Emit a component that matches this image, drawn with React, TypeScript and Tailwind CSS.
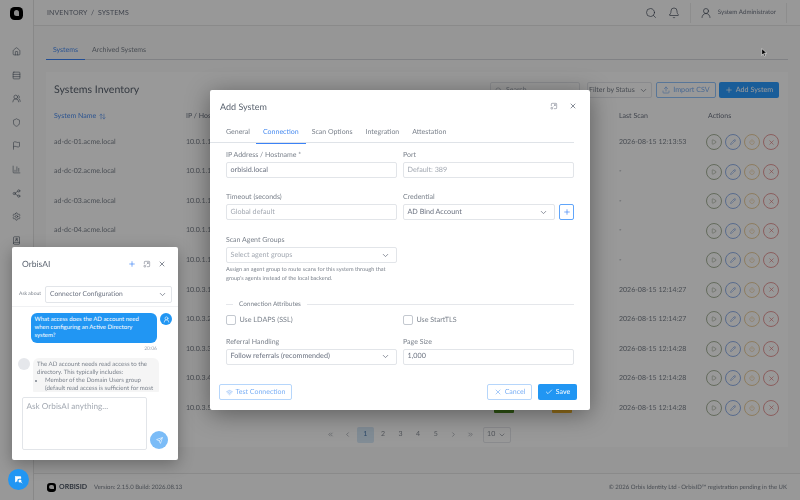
import { Home, Rows3, UsersRound, Shield, Flag, ChartColumn, Share2, Settings, BookUser, Search, Bell, UserRound, ArrowUpDown, ChevronDown, Upload, Plus, Play, Pencil, Power, X, Check, Wifi, Send, ChevronLeft, ChevronRight, ChevronsLeft, ChevronsRight } from 'lucide-react'

const font = { fontFamily: "Lato, 'Noto Sans', sans-serif" }

const navIcons = [Home, Rows3, UsersRound, Shield, Flag, ChartColumn, Share2, Settings, BookUser]

const rows = [
  { name: 'ad-dc-01.acme.local', ip: '10.0.1.10', scan: '2026-08-15 12:13:53' },
  { name: 'ad-dc-02.acme.local', ip: '10.0.1.11', scan: '-' },
  { name: 'ad-dc-03.acme.local', ip: '10.0.1.12', scan: '-' },
  { name: 'ad-dc-04.acme.local', ip: '10.0.1.13', scan: '-' },
  { name: '', ip: '10.0.1.14', scan: '-' },
  { name: '', ip: '10.0.3.10', scan: '2026-08-15 12:14:27' },
  { name: '', ip: '10.0.3.20', scan: '2026-08-15 12:14:27' },
  { name: '', ip: '10.0.3.30', scan: '2026-08-15 12:14:28' },
  { name: '', ip: '10.0.3.40', scan: '2026-08-15 12:14:28' },
  { name: '', ip: '10.0.3.50', scan: '2026-08-15 12:14:28' },
]

function Logo({ size }: { size: string }) {
  return (
    <span className={`${size} flex items-center justify-center rounded-[35%] bg-black`}>
      <span className="h-[45%] w-[45%] rounded-full rounded-br-none bg-[#e8e8e8]" />
    </span>
  )
}

function WindowMax({ className }: { className: string }) {
  return (
    <svg viewBox="0 0 24 24" fill="none" stroke="currentColor" strokeWidth="1.6" className={className}>
      <path d="M3 17a1 1 0 0 1 1-1h3a1 1 0 0 1 1 1v3a1 1 0 0 1-1 1H4a1 1 0 0 1-1-1z" />
      <path d="M4 12V6a2 2 0 0 1 2-2h12a2 2 0 0 1 2 2v12a2 2 0 0 1-2 2h-6" />
      <path d="M12 8h4v4M16 8l-5 5" />
    </svg>
  )
}

function ActionBtn({ color, children }: { color: string; children: React.ReactNode }) {
  return <span className={`flex h-4 w-4 items-center justify-center rounded-full border ${color}`}>{children}</span>
}

function Field({ label, value, muted, select, className }: { label?: string; value: string; muted?: boolean; select?: boolean; className?: string }) {
  return (
    <div className={className}>
      {label && <div className="mb-[2px] h-[10px] text-[7px] leading-[10px] text-[#7b828c]">{label}</div>}
      <div className={`flex h-4 items-center justify-between rounded-[2px] border border-[#e2e5e9] bg-white px-[3.5px] text-[7.2px] ${muted ? 'text-[#a3a9b2]' : 'text-[#6b7280]'}`}>
        <span>{value}</span>
        {select && <ChevronDown className="mr-[3px] h-[9px] w-[9px] text-[#6b7280]" />}
      </div>
    </div>
  )
}

function Page() {
  return (
    <div className="flex h-[500px] w-[800px] bg-[#fbfbfb] blur-[0.4px]">
      <aside className="flex w-[34px] shrink-0 flex-col items-center border-r border-[#e3e3e3] bg-[#fdfdfd]">
        <div className="flex h-[26px] items-center"><Logo size="h-[13px] w-[13px]" /></div>
        <div className="mt-[21px] flex flex-col items-center gap-[14.6px]">
          {navIcons.map((Icon, i) => <Icon key={i} className="h-[9px] w-[9px] text-[#4b5563]" strokeWidth={1.5} />)}
        </div>
      </aside>

      <div className="flex min-w-0 flex-1 flex-col">
        <header className="flex h-[26px] shrink-0 items-center border-b border-[#e6e6e6] bg-[#fdfdfd] pl-[13px]">
          <span className="pt-[1px] text-[7px] tracking-[0.1px] text-[#6b7280]">INVENTORY&nbsp;&nbsp;/&nbsp;&nbsp;SYSTEMS</span>
          <div className="ml-auto mr-[13px] flex items-center">
            <Search className="mr-[11px] h-[12px] w-[12px] text-[#374151]" strokeWidth={1.3} />
            <Bell className="mr-[10px] h-[12px] w-[12px] text-[#374151]" strokeWidth={1.3} />
            <div className="flex h-[20px] items-center gap-[6px] border-x border-[#ececec] pl-[9px] pr-[10px]">
              <UserRound className="h-[12px] w-[12px] text-[#374151]" strokeWidth={1.3} />
              <span className="text-[6.2px] text-[#6b7280]">System Administrator</span>
            </div>
          </div>
        </header>

        <main className="min-h-0 flex-1 px-3 pt-[17px]">
          <div className="flex h-[17px] border-b border-[#d5d8dc] text-[7px]">
            <span className="-mb-px w-[39px] border-b border-[#3b82f6] pt-[2px] text-center text-[#4b8df0]">Systems</span>
            <span className="ml-[7px] pt-[2px] text-[#7b828c]">Archived Systems</span>
          </div>

          <section className="mt-3 h-[375px] bg-white px-2 pt-[10px]">
            <div className="flex h-4 items-center pr-[1px]">
              <h1 className="pt-[1px] text-[10.6px] text-[#5b6470]">Systems Inventory</h1>
              <div className="ml-auto flex h-4 items-center">
                <div className="flex h-4 w-[90px] items-center gap-1 rounded-[2px] border border-[#e5e7eb] px-1 text-[7px] text-[#9ca3af]">
                  <Search className="h-[7px] w-[7px]" />Search...
                </div>
                <div className="ml-[7px] flex h-4 w-[65px] items-center justify-between rounded-[2px] border border-[#e5e7eb] pl-[1px] pr-[3px] text-[7px] text-[#7b828c]">
                  Filter by Status<ChevronDown className="h-[9px] w-[9px]" />
                </div>
                <div className="ml-[4px] flex h-4 w-[60px] items-center justify-center gap-[3px] rounded-[2px] border border-[#93c5fd] text-[7.2px] text-[#7cb0f5]">
                  <Upload className="h-2 w-2" />Import CSV
                </div>
                <div className="ml-[3px] flex h-4 w-[60px] items-center justify-center gap-[3px] rounded-[2px] bg-[#2b9bff] text-[7.2px] text-white">
                  <Plus className="h-2 w-2" />Add System
                </div>
              </div>
            </div>

            <div className="mt-2 grid h-[21.25px] grid-cols-[132px_308px_58px_67px_89px_1fr] items-center text-[7px] text-[#6b7280]">
              <span className="flex items-center gap-[3px] text-[#4b8df0]">System Name <ArrowUpDown className="h-[7px] w-[7px]" /></span>
              <span>IP / Hostname</span>
              <span>Type</span>
              <span>Status</span>
              <span>Last Scan</span>
              <span>Actions</span>
            </div>
            {rows.map((r) => (
              <div key={r.ip} className="grid h-[29.55px] grid-cols-[132px_308px_58px_67px_89px_1fr] items-center text-[7px] text-[#7b828c]">
                <span>{r.name}</span>
                <span>{r.ip}</span>
                <span className="h-[10px] w-5 rounded-[1px] bg-[#4c8a1e]" />
                <span className="h-[10px] w-5 rounded-[1px] bg-[#f5b82e]" />
                <span>{r.scan}</span>
                <div className="-ml-[2px] flex gap-[3px]">
                  <ActionBtn color="border-[#a7b39b] text-[#8c9981]"><Play className="h-[6px] w-[6px]" /></ActionBtn>
                  <ActionBtn color="border-[#93b3ec] text-[#6f98e5]"><Pencil className="h-[6px] w-[6px]" /></ActionBtn>
                  <ActionBtn color="border-[#ecd09f] text-[#ecc07f]"><Power className="h-[6px] w-[6px]" /></ActionBtn>
                  <ActionBtn color="border-[#e89c9c] text-[#dd6e6e]"><X className="h-[7px] w-[7px]" /></ActionBtn>
                </div>
              </div>
            ))}
            <div className="mt-1 flex h-4 items-center justify-center pr-[2px] text-[7px] text-[#8a9099]">
              <span className="flex w-[17.6px] justify-center"><ChevronsLeft className="h-[7px] w-[7px]" /></span>
              <span className="flex w-[17.6px] justify-center"><ChevronLeft className="h-[7px] w-[7px]" /></span>
              {[1, 2, 3, 4, 5].map((n) => (
                <span key={n} className={`flex h-4 w-[17.6px] items-center justify-center ${n === 1 ? 'rounded-[2px] bg-[#d7e9f8] text-[#4a7bb0]' : ''}`}>{n}</span>
              ))}
              <span className="flex w-[17.6px] justify-center"><ChevronRight className="h-[7px] w-[7px]" /></span>
              <span className="flex w-[17.6px] justify-center"><ChevronsRight className="h-[7px] w-[7px]" /></span>
              <span className="ml-[3px] flex h-4 w-[28px] items-center justify-center gap-[3px] rounded-[2px] border border-[#e5e7eb]">10<ChevronDown className="h-2 w-2" /></span>
            </div>
          </section>
        </main>

        <footer className="flex h-[27px] shrink-0 items-center border-t border-[#e6e6e6] bg-[#fdfdfd] px-[13px]">
          <Logo size="h-[9px] w-[9px]" />
          <span className="ml-[3px] text-[7px] font-bold text-[#4b5563]">ORBISID</span>
          <span className="ml-[7px] text-[6px] text-[#7b828c]">Version: 2.15.0 Build: 2026.08.13</span>
          <span className="ml-auto text-[6px] text-[#7b828c]">© 2026 Orbis Identity Ltd · OrbisID™ registration pending in the UK</span>
        </footer>
      </div>
    </div>
  )
}

function AddSystemModal() {
  return (
    <div className="absolute left-[210px] top-[90px] z-20 flex h-[320px] w-[380px] flex-col rounded-[2px] bg-white shadow-[0_4px_24px_rgba(0,0,0,0.4)] blur-[0.25px]">
      <div className="flex h-[32px] shrink-0 items-center pl-[10px] pr-[13px]">
        <span className="pt-[2px] text-[9px] text-[#5b6470]">Add System</span>
        <WindowMax className="ml-auto h-[8px] w-[8px] text-[#6b7280]" />
        <X className="ml-[11px] h-[8px] w-[8px] text-[#4b5563]" />
      </div>
      <div className="mr-[16px] flex h-[21px] shrink-0 items-center gap-[13px] border-b border-[#dfe3e8] pl-[16px] pt-[1px] text-[7px] text-[#7b828c]">
        <span>General</span>
        <span className="relative flex h-[20px] items-center text-[#4b8df0]">Connection<span className="absolute -bottom-px -left-[7px] -right-[7px] h-px bg-[#3b82f6]" /></span>
        <span>Scan Options</span>
        <span>Integration</span>
        <span>Attestation</span>
      </div>
      <div className="flex-1 px-[16px] pt-[7px]">
        <div className="grid grid-cols-[171px_171px] gap-x-[6px]">
          <Field label="IP Address / Hostname *" value="orbisid.local" />
          <Field label="Port" value="Default: 389" muted />
        </div>
        <div className="mt-[14px] grid grid-cols-[171px_171px] gap-x-[6px]">
          <Field label="Timeout (seconds)" value="Global default" muted />
          <div className="flex items-end gap-[4px]">
            <Field label="Credential" value="AD Bind Account" select className="flex-1" />
            <span className="flex h-4 w-[15px] items-center justify-center rounded-[2px] border border-[#60a5fa]"><Plus className="h-[8px] w-[8px] text-[#3b82f6]" /></span>
          </div>
        </div>
        <Field label="Scan Agent Groups" value="Select agent groups" muted select className="mt-[15px] w-[171px]" />
        <p className="mt-[2px] w-[171px] text-[5.6px] leading-[9px] text-[#7b828c]">Assign an agent group to route scans for this system through that group's agents instead of the local backend.</p>
        <div className="mt-[17px] flex h-[9px] items-center text-[6.4px] text-[#7b828c]">
          <span className="mr-[3px] h-px w-[7px] bg-[#e5e7eb]" />
          <span className="px-[3px]">Connection Attributes</span>
          <span className="ml-[3px] h-px flex-1 bg-[#e5e7eb]" />
        </div>
        <div className="mt-[6px] grid grid-cols-[171px_171px] gap-x-[6px] text-[7.2px] text-[#7b828c]">
          <label className="flex items-center gap-[3.5px]"><span className="h-[10px] w-[10px] rounded-[2px] border border-[#c4c9d0]" />Use LDAPS (SSL)</label>
          <label className="flex items-center gap-[3.5px]"><span className="h-[10px] w-[10px] rounded-[2px] border border-[#c4c9d0]" />Use StartTLS</label>
        </div>
        <div className="mt-[11px] grid grid-cols-[171px_171px] gap-x-[6px]">
          <Field label="Referral Handling" value="Follow referrals (recommended)" select />
          <Field label="Page Size" value="1,000" />
        </div>
      </div>
      <div className="flex h-[26px] shrink-0 items-start pl-[9px] pr-[13px]">
        <span className="flex h-4 w-[73px] items-center justify-center gap-[3px] rounded-[2px] border border-[#b6d6fb] text-[7px] text-[#7cb0f5]"><Wifi className="h-[7px] w-[7px]" />Test Connection</span>
        <span className="ml-auto flex h-4 w-[45px] items-center justify-center gap-[3px] rounded-[2px] border border-[#b6d6fb] text-[7px] text-[#7cb0f5]"><X className="h-[8px] w-[8px]" />Cancel</span>
        <span className="ml-[6px] flex h-4 w-[39px] items-center justify-center gap-[3px] rounded-[2px] bg-[#2196f3] text-[7px] text-white"><Check className="h-[8px] w-[8px]" />Save</span>
      </div>
    </div>
  )
}

function ChatPanel() {
  return (
    <div className="absolute left-[12px] top-[247px] z-30 flex h-[213px] w-[166px] flex-col rounded-[2px] bg-white shadow-[0_4px_16px_rgba(0,0,0,0.3)] blur-[0.25px]">
      <div className="flex h-[39px] shrink-0 items-center pb-[5px] pl-[10px] pr-[12px]">
        <span className="text-[8.5px] text-[#5b6470]">OrbisAI</span>
        <Plus className="ml-auto h-[8px] w-[8px] text-[#3b82f6]" />
        <WindowMax className="ml-[7px] h-[8px] w-[8px] text-[#6b7280]" />
        <X className="ml-[7px] h-[8px] w-[8px] text-[#4b5563]" />
      </div>
      <div className="flex h-[21px] shrink-0 items-start border-b border-[#f0f1f3] pl-[7px] pr-[6px]">
        <span className="mt-[5px] w-[26px] text-[5px] text-[#7b828c]">Ask about</span>
        <div className="flex h-[17px] flex-1 items-center justify-between rounded-[2px] border border-[#e2e5e9] px-[4px] text-[6.7px] text-[#6b7280]">
          Connector Configuration<ChevronDown className="h-[9px] w-[9px]" />
        </div>
      </div>
      <div className="h-[85px] shrink-0 overflow-hidden pl-[19px] pr-[6px] pt-[6px]">
        <div className="flex items-start gap-[3px]">
          <p className="w-[126px] rounded-[6px] bg-[#2196f3] px-[3.5px] py-[3px] text-[6px] leading-[8px] text-white">What access does the AD account need when configuring an Active Directory system?</p>
          <span className="flex h-3 w-3 items-center justify-center rounded-full bg-[#2196f3]"><UserRound className="h-[7px] w-[7px] text-white" /></span>
        </div>
        <div className="mt-[2px] h-2 w-[126px] text-right text-[5px] leading-2 text-[#9ca3af]">20:06</div>
        <div className="-ml-[13px] mt-[5px] flex items-start gap-[3px]">
          <span className="h-3 w-3 shrink-0 rounded-full bg-[#e5e7eb]" />
          <div className="w-[126px] rounded-[6px] bg-[#f5f5f5] px-[4px] py-[2.5px] text-[6.1px] leading-[8.2px] text-[#7b828c]">
            <p>The AD account needs read access to the directory. This typically includes:</p>
            <ul className="list-disc pl-[8px]">
              <li>Member of the Domain Users group (default read access is sufficient for most</li>
            </ul>
          </div>
        </div>
      </div>
      <div className="flex flex-1 items-start pl-[10px] pt-[5px]">
        <div className="h-[53px] w-[125px] rounded-[2px] border border-[#e2e5e9] px-[3.5px] py-[3px] text-[8.2px] leading-[10px] text-[#a3a9b2]">Ask OrbisAI anything...</div>
        <span className="ml-[3px] mt-[34px] flex h-[18px] w-[18px] items-center justify-center rounded-full bg-[#7bbcf7]"><Send className="h-[7px] w-[7px] text-white" /></span>
      </div>
    </div>
  )
}

export default function App() {
  return (
    <div className="relative h-[500px] w-[800px] overflow-hidden [text-rendering:geometricPrecision]" style={font}>
      <Page />
      <div className="absolute inset-0 z-10 bg-black/40" />
      <AddSystemModal />
      <ChatPanel />
      <button className="absolute left-[8px] top-[469px] z-30 flex h-[21px] w-[21px] items-center justify-center rounded-full bg-[#2196f3]">
        <svg viewBox="0 0 24 24" className="h-[9px] w-[9px]" fill="white"><path d="M4 3h13a2 2 0 0 1 2 2v5h-6a4 4 0 0 0-4 4v3H7l-4 3V5a1 1 0 0 1 1-2z" /><circle cx="16" cy="16" r="4" /><path d="M19 19l3 3" stroke="white" strokeWidth="2" /></svg>
      </button>
      <svg viewBox="0 0 12 16" className="absolute left-[761px] top-[48px] z-30 h-[9px] w-[7px]"><path d="M1 1v12l3-3 2 5 2-1-2-5h4z" fill="black" stroke="white" strokeWidth="1" /></svg>
    </div>
  )
}
